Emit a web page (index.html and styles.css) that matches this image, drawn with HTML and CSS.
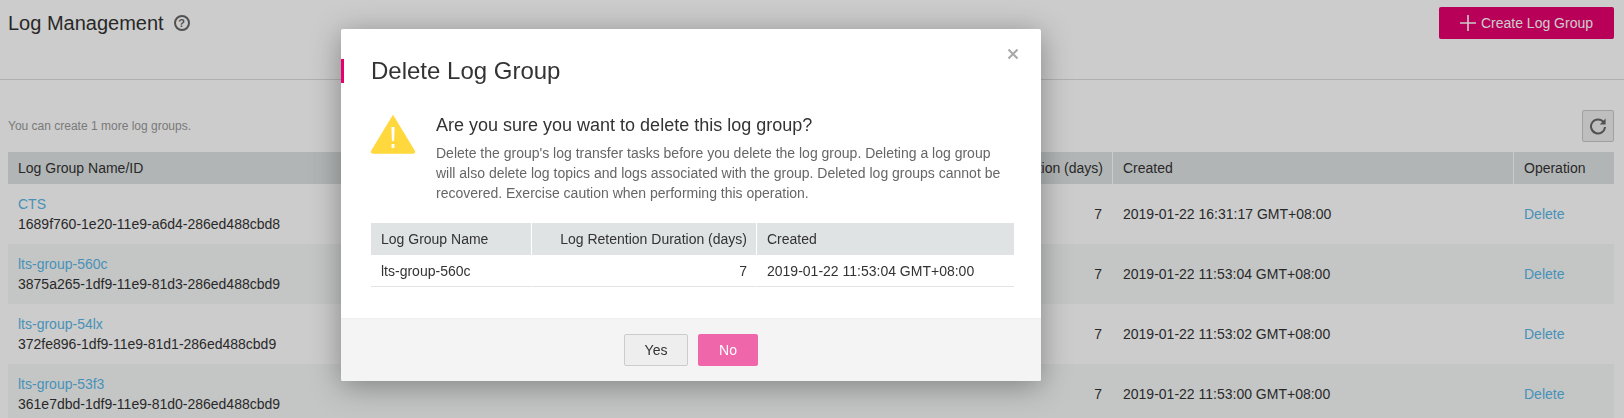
FILE: index.html
```html
<!DOCTYPE html>
<html lang="en">
<head>
<meta charset="utf-8">
<title>Log Management</title>
<link rel="stylesheet" href="styles.css">
</head>
<body>
<main class="page">
  <header class="top">
    <div class="title-wrap">
      <h1 class="page-title">Log Management</h1>
      <span class="help">?</span>
    </div>
    <button class="create-btn">
      <svg class="plus" width="16" height="16" viewBox="0 0 16 16"><path d="M8 0V16M0 8H16" stroke="#fff" stroke-width="1.6" fill="none"/></svg>
      <span>Create Log Group</span>
    </button>
  </header>
  <div class="toolbar">
    <span class="quota">You can create 1 more log groups.</span>
    <button class="refresh">
      <svg width="18" height="18" viewBox="0 0 18 18"><path d="M14.6 5.2A7 7 0 1 0 16 10" stroke="#666" stroke-width="2" fill="none"/><path d="M16.6 1.6V7.4H10.8Z" fill="#666"/></svg>
    </button>
  </div>
  <table class="grid">
    <colgroup><col class="c-name"><col class="c-ret"><col class="c-created"><col class="c-op"></colgroup>
    <thead>
      <tr><th>Log Group Name/ID</th><th class="num">Log Retention Duration (days)</th><th>Created</th><th>Operation</th></tr>
    </thead>
    <tbody>
      <tr><td><a class="link">CTS</a><div>1689f760-1e20-11e9-a6d4-286ed488cbd8</div></td><td class="num">7</td><td>2019-01-22 16:31:17 GMT+08:00</td><td><a class="link">Delete</a></td></tr>
      <tr><td><a class="link">lts-group-560c</a><div>3875a265-1df9-11e9-81d3-286ed488cbd9</div></td><td class="num">7</td><td>2019-01-22 11:53:04 GMT+08:00</td><td><a class="link">Delete</a></td></tr>
      <tr><td><a class="link">lts-group-54lx</a><div>372fe896-1df9-11e9-81d1-286ed488cbd9</div></td><td class="num">7</td><td>2019-01-22 11:53:02 GMT+08:00</td><td><a class="link">Delete</a></td></tr>
      <tr><td><a class="link">lts-group-53f3</a><div>361e7dbd-1df9-11e9-81d0-286ed488cbd9</div></td><td class="num">7</td><td>2019-01-22 11:53:00 GMT+08:00</td><td><a class="link">Delete</a></td></tr>
    </tbody>
  </table>
</main>
<div class="overlay"></div>
<section class="modal">
  <svg class="close" width="12" height="12" viewBox="0 0 12 12"><path d="M1.5 1.5L10.5 10.5M10.5 1.5L1.5 10.5" stroke="#aaa" stroke-width="2.2" fill="none"/></svg>
  <h2 class="modal-title">Delete Log Group</h2>
  <div class="modal-body">
    <div class="warn-row">
      <svg class="warn" width="46" height="40" viewBox="0 0 46 40"><path d="M23 1.5L44.6 37.2A1.3 1.3 0 0 1 43.5 39.2H2.5A1.3 1.3 0 0 1 1.4 37.2Z" fill="#ffd83e" stroke="#ffd83e" stroke-width="1" stroke-linejoin="round"/><path d="M21.4 13H24.6L24.1 27H21.9Z M21.6 30H24.4V34H21.6Z" fill="#fff"/></svg>
      <div class="warn-text">
        <h3 class="question">Are you sure you want to delete this log group?</h3>
        <p class="desc">Delete the group's log transfer tasks before you delete the log group. Deleting a log group will also delete log topics and logs associated with the group. Deleted log groups cannot be recovered. Exercise caution when performing this operation.</p>
      </div>
    </div>
    <table class="mini">
      <colgroup><col class="m-name"><col class="m-ret"><col class="m-created"></colgroup>
      <thead><tr><th>Log Group Name</th><th class="num">Log Retention Duration (days)</th><th>Created</th></tr></thead>
      <tbody><tr><td>lts-group-560c</td><td class="num">7</td><td>2019-01-22 11:53:04 GMT+08:00</td></tr></tbody>
    </table>
  </div>
  <footer class="modal-foot">
    <button class="btn btn-yes">Yes</button>
    <button class="btn btn-no">No</button>
  </footer>
</section>
</body>
</html>
```
FILE: styles.css
```css
* { box-sizing: border-box; }
html, body { margin: 0; height: 100%; overflow: hidden; }
body { background: #fff; font-family: "Liberation Sans", Arial, sans-serif; font-size: 14px; color: #333; }
button { font-family: inherit; cursor: pointer; }

.page { padding: 7px 10px 0 8px; }
.top { display: flex; justify-content: space-between; align-items: flex-start; height: 73px; }
.title-wrap { display: flex; align-items: center; height: 32px; }
.page-title { margin: 0; font-size: 20px; font-weight: 400; line-height: 32px; color: #333; }
.help { display: flex; align-items: center; justify-content: center; width: 16px; height: 16px; margin-left: 10px; border: 2px solid #666; border-radius: 50%; font-size: 11px; font-weight: 700; line-height: 1; color: #666; }
.create-btn { display: flex; align-items: center; justify-content: center; gap: 5px; width: 175px; height: 32px; padding: 0; border: 0; border-radius: 2px; background: #e6006e; color: #fff; font-size: 14px; }

.toolbar { display: flex; justify-content: space-between; align-items: center; height: 32px; margin: 30px 0 10px; position: relative; }
.toolbar::before { content: ""; position: absolute; left: -8px; right: -10px; top: -31px; border-top: 1px solid #ddd; }
.quota { font-size: 12px; color: #999; }
.refresh { display: flex; align-items: center; justify-content: center; width: 32px; height: 32px; padding: 0; border: 1px solid #c8c8c8; border-radius: 2px; background: #eee; }

.grid { width: 1606px; border-collapse: separate; border-spacing: 0; table-layout: fixed; }
.c-name { width: 864px; }
.c-ret { width: 240px; }
.c-created { width: 401px; }
.c-op { width: 101px; }
.grid th { height: 32px; padding: 0 10px; background: #dfe3e3; font-weight: 400; text-align: left; border-left: 1px solid #fff; color: #333; }
.grid th:first-child { border-left: 0; }
.grid td { height: 60px; padding: 0 10px; border-left: 1px solid transparent; color: #333; }
.grid td:first-child { border-left: 0; }
.grid td div { line-height: 20px; }
.grid tbody tr:nth-child(even) td { background: #f6f8f8; }
.grid td:first-child .link { display: block; line-height: 20px; }
.grid th.num, .grid td.num { text-align: right; }
.grid th.num { padding-right: 9px; }
.link { color: #5bb6e6; }

.overlay { position: fixed; inset: 0; background: rgba(0, 0, 0, .2); }

.modal { position: absolute; left: 341px; top: 29px; width: 700px; height: 352px; display: flex; flex-direction: column; background: #fff; border-radius: 2px; box-shadow: 0 5px 30px rgba(0, 0, 0, .35); }
.close { position: absolute; right: 22px; top: 19px; }
.modal-title { position: relative; margin: 30px 0 0; padding-left: 30px; font-size: 24px; font-weight: 400; line-height: 24px; color: #333; }
.modal-title::before { content: ""; position: absolute; left: 0; top: 0; width: 3px; height: 24px; background: #e6006e; }
.modal-body { flex: 1; padding: 31px 26px 0 30px; }
.warn-row { display: flex; align-items: flex-start; }
.warn { flex: none; margin-left: -1px; }
.warn-text { margin-left: 20px; padding-top: 1px; }
.question { margin: 0; font-size: 18px; font-weight: 400; line-height: 20px; color: #333; }
.desc { width: 572px; margin: 8px 0 0; font-size: 14px; line-height: 20px; color: #666; }
.mini { width: 643px; margin-top: 20px; border-collapse: separate; border-spacing: 0; table-layout: fixed; }
.m-name { width: 160px; }
.m-ret { width: 225px; }
.m-created { width: 258px; }
.mini th { height: 32px; padding: 0 10px; background: #dfe3e3; font-weight: 400; text-align: left; border-left: 1px solid #fff; color: #333; }
.mini th:first-child { border-left: 0; }
.mini td { height: 32px; padding: 0 10px; border-left: 1px solid transparent; border-bottom: 1px solid #e1e3e6; color: #333; }
.mini td:first-child { border-left: 0; }
.mini th.num, .mini td.num { text-align: right; padding-right: 9px; }

.modal-foot { display: flex; justify-content: center; gap: 10px; height: 63px; padding-top: 15px; background: #f4f4f4; border-top: 1px solid #eee; border-radius: 0 0 2px 2px; }
.btn { height: 32px; padding: 0; border-radius: 2px; font-size: 14px; }
.btn-yes { width: 64px; background: #eee; border: 1px solid #ccc; color: #333; }
.btn-no { width: 60px; background: #f066ab; border: 0; color: #fff; }
```
